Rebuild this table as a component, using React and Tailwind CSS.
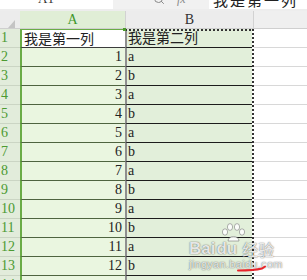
import React from 'react';
import { Search } from 'lucide-react';

const serif = "font-['Liberation_Serif','Noto_Sans_CJK_SC',serif]";

// rows 1..14 of the sheet; row 1 holds the column titles
const rows = Array.from({ length: 14 }, (_, i) => {
  const n = i + 1;
  if (n === 1) return { n, a: '我是第一列', b: '我是第二列' };
  if (n === 14) return { n, a: '', b: '' };
  return { n, a: String(n - 1), b: n % 2 === 0 ? 'a' : 'b' };
});

const Corner = () => (
  <svg width="20" height="18" viewBox="0 0 20 18" className="block">
    <polygon points="15,17 15,9 8,17" fill="#c4c4c4" />
  </svg>
);

const Watermark = () => (
  <div className="pointer-events-none absolute left-[189px] top-[222px] text-white/85 [text-shadow:0_0_1px_rgba(0,0,0,0.6),0_0_2px_rgba(0,0,0,0.25)]">
    <svg width="30" height="20" viewBox="0 0 30 20" className="absolute left-[30px] top-[1px]">
      <g fill="rgba(255,255,255,0.85)" stroke="rgba(110,110,110,0.6)" strokeWidth="0.9">
        <ellipse cx="6" cy="9" rx="2.6" ry="3.2" />
        <ellipse cx="11" cy="4" rx="2.6" ry="3.4" />
        <ellipse cx="18" cy="4" rx="2.6" ry="3.4" />
        <ellipse cx="23" cy="9" rx="2.6" ry="3.2" />
        <path d="M9 18 C 9 12, 20 12, 20 18 Z" />
      </g>
    </svg>
    <div className="mt-[18px] flex items-end font-['Liberation_Sans',sans-serif] text-[17px] font-bold leading-none">
      <span>Bai</span>
      <span className="ml-[1px]">du</span>
      <span className="ml-[5px] font-['Noto_Sans_CJK_SC',sans-serif] text-[16px] font-normal">经验</span>
    </div>
    <div className="mt-[2px] font-['Liberation_Sans',sans-serif] text-[11px] leading-none tracking-[0.3px]">
      jingyan.baidu.com
    </div>
  </div>
);

export default function App() {
  return (
    <div className={`relative h-[280px] w-[307px] overflow-hidden bg-[#ededed] ${serif}`}>
      {/* name box + formula bar, scrolled half out of view */}
      <div className="-mt-[11px] flex h-[20px] items-center">
        <div className="flex h-full w-[113px] items-center bg-white pl-[38px] text-[13px] text-[#333]">
          A1
        </div>
        <div className="flex h-full w-[96px] items-center bg-[#f1f1f1] pl-[40px] text-[#8a8a8a]">
          <Search size={12} strokeWidth={2} />
          <span className="ml-[12px] text-[12px] italic">fx</span>
        </div>
        <div className="flex h-full flex-1 items-center bg-white pl-[4px] font-['Noto_Sans_CJK_SC',sans-serif] text-[15px] leading-none tracking-[2px] text-[#222]">
          我是第一列
        </div>
      </div>

      {/* column headers */}
      <div className="mt-[2px] flex h-[18px] border-b border-[#cfcfcf] text-[14px] leading-[18px]">
        <div className="w-[20px] bg-[#ececec]">
          <Corner />
        </div>
        <div className="w-[105px] bg-[#e0eed6] text-center text-[#3f962c]">A</div>
        <div className="w-[128px] border-l border-[#d2d2d2] bg-[#ececec] text-center text-[#333]">B</div>
        <div className="flex-1 border-l border-[#d2d2d2] bg-[#efefef]" />
      </div>

      {/* cells */}
      <div className="relative">
        {rows.map((r) => (
          <div key={r.n} className="flex h-[19px] text-[14px] leading-[18px]">
            <div className="w-[20px] border-b border-[#cbd5c4] bg-[#e2ecdb] pl-[1px] text-[#4c9a32]">{r.n}</div>
            <div
              className={`w-[105px] border-l-2 border-b border-l-[#6aac46] ${
                r.n === 1
                  ? 'border-t border-t-[#6aac46] border-b-[#3c3c3c] bg-white pl-[2px] text-left font-["Noto_Sans_CJK_SC",sans-serif] text-[14px] leading-[17px]'
                  : 'border-b-[#4f6440] bg-[#eaf6e0] pr-[3px] text-right'
              } text-[#222]`}
            >
              {r.a}
            </div>
            <div
              className={`w-[128px] border-l-2 border-b border-l-[#8f8f8f] border-b-[#1c1c1c] bg-[#e2efda] pl-[1px] text-[#222] ${
                r.n === 1 ? 'font-["Noto_Sans_CJK_SC",sans-serif] leading-[17px]' : ''
              }`}
            >
              {r.b}
            </div>
            <div className="flex-1 border-b border-[#d8d8d8] bg-white" />
          </div>
        ))}

        {/* copy marquee round column B */}
        <div className="absolute left-[125px] top-0 h-[2px] w-[129px] bg-[repeating-linear-gradient(to_right,#333_0_2px,#e2efda_2px_4px)]" />
        <div className="absolute left-[252px] top-0 h-full w-[2px] bg-[repeating-linear-gradient(to_bottom,#333_0_2px,#fff_2px_4px)]" />
        {/* fill handle */}
        <div className="absolute left-[123px] top-[-1px] h-[3px] w-[3px] bg-[#4d9a2e]" />
      </div>

      <Watermark />

      {/* pen mark */}
      <svg width="34" height="10" viewBox="0 0 34 10" className="pointer-events-none absolute left-[235px] top-[263px]">
        <path d="M3 7.5 C 12 7.5, 21 7, 27 5.5 L 30 3.5" fill="none" stroke="#e8242b" strokeWidth="2" strokeLinecap="round" />
      </svg>
    </div>
  );
}
